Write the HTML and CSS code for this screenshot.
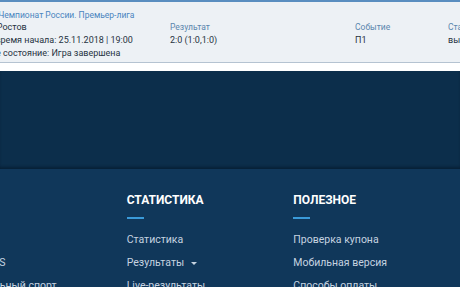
FILE: index.html
```
<!DOCTYPE html>
<html lang="ru">
<head>
  <meta charset="UTF-8" />
  <title>Результаты</title>
  <link rel="stylesheet" href="styles.css">
</head>
<body>

<div class="pagina">
  <section class="tarjeta">
    <div class="col col-evento">
      <div class="liga">Футбол. Чемпионат России. Премьер-лига</div>
      <div class="fila">Зенит - Ростов</div>
      <div class="fila">Дата и время начала: 25.11.2018 | 19:00</div>
      <div class="fila">Текущее состояние: Игра завершена</div>
    </div>
    <div class="col">
      <div class="rotulo">Результат</div>
      <div class="fila">2:0 (1:0,1:0)</div>
    </div>
    <div class="col">
      <div class="rotulo">Событие</div>
      <div class="fila">П1</div>
    </div>
    <div class="col">
      <div class="rotulo">Статус</div>
      <div class="fila">выигрыш</div>
    </div>
  </section>
</div>

<div class="banda"></div>

<footer class="pie">
  <div class="columnas">
    <div class="columna">
      <h3>ИГРЫ</h3>
      <span class="raya"></span>
      <a href="#">Казино</a>
      <a href="#">Apple iOS</a>
      <a href="#">Виртуальный спорт</a>
    </div>
    <div class="columna">
      <h3>СТАТИСТИКА</h3>
      <span class="raya"></span>
      <a href="#">Статистика</a>
      <a href="#">Результаты <span class="flecha"></span></a>
      <a href="#">Live-результаты</a>
    </div>
    <div class="columna">
      <h3>ПОЛЕЗНОЕ</h3>
      <span class="raya"></span>
      <a href="#">Проверка купона</a>
      <a href="#">Мобильная версия</a>
      <a href="#">Способы оплаты</a>
    </div>
  </div>
</footer>

</body>
</html>
```

FILE: styles.css
```
html, body { margin: 0; background: #0c2e4b; overflow: hidden; }
body { font-family: Roboto, "Liberation Sans", sans-serif; width: 460px; height: 287px; }

.pagina { background: #fff; padding-bottom: 8px; }
.tarjeta { display: grid; grid-template-columns: 205px 185px 93px 60px; margin-left: -35px; width: 560px; background: #edf1f5; border-top: 2px solid #5a8ec0; border-bottom: 1px solid #b5c3d1; padding: 6.5px 0 2.7px; font-size: 9px; line-height: 12.7px; color: #27333f; }
.col { display: flex; flex-direction: column; }
.col:not(.col-evento) { padding-top: 12.7px; }
.liga { color: #4a85bf; font-size: 8.5px; }
.rotulo { color: #5b86ae; font-size: 8.5px; }
.fila { white-space: nowrap; }

.banda { height: 98px; background: #0c2e4b; box-shadow: inset 0 -3px 3px -1px rgba(4, 20, 36, 0.55); }

.pie { background: #10375a; height: 120px; padding-top: 24px; }
.columnas { display: flex; margin-left: -40px; }
.columna { width: 168px; display: flex; flex-direction: column; }
.columna h3 { margin: 0; color: #fff; font-size: 12px; font-weight: 700; line-height: 14px; }
.raya { display: block; width: 17px; height: 2px; background: #3a9ad9; margin: 10px 0 14px; }
.columna a { color: #c6d3e0; font-size: 10.5px; line-height: 13px; text-decoration: none; margin-bottom: 10px; white-space: nowrap; }
.flecha { display: inline-block; margin-left: 4px; vertical-align: middle; border-left: 3px solid transparent; border-right: 3px solid transparent; border-top: 3px solid #c6d3e0; }
```
